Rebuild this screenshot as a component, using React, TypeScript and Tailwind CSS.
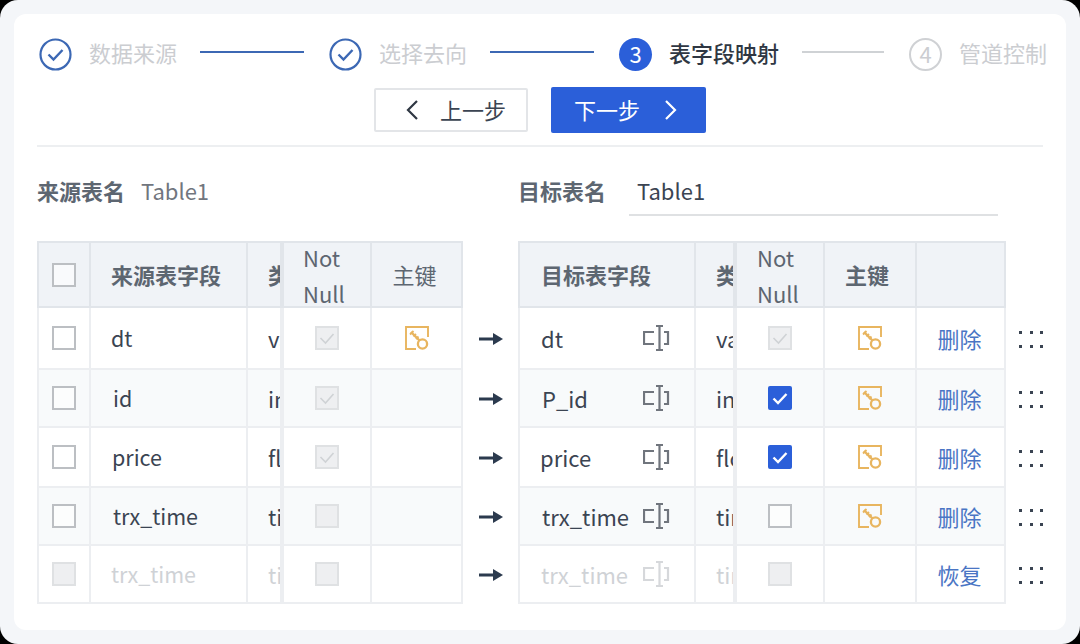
import React from "react";

const FONT = { fontFamily: '"Noto Sans CJK SC", "Noto Sans", sans-serif' };

function CircleCheck() {
  return (
    <svg width="33" height="33" viewBox="0 0 33 33" fill="none" className="shrink-0">
      <circle cx="16.5" cy="16.5" r="15" stroke="#3c68b4" strokeWidth="2.2" />
      <path d="M9.5 16.5l5 5 9-9.5" stroke="#3c68b4" strokeWidth="2.4" />
    </svg>
  );
}

function KeyIcon() {
  return (
    <svg width="24" height="24" viewBox="0 0 24 24" fill="none" stroke="#e8b55f" strokeWidth="1.9">
      <path d="M23 11V1H1v22h10" />
      <circle cx="17.500" cy="18" r="4.600" strokeWidth="2.300" />
      <path d="M6 6l8.500 8.500" strokeWidth="2.400" />
      <path d="M8.500 5L5 8.500M11 8l-2.500 2.500M13.500 10.500L11 13" strokeWidth="1.900" />
    </svg>
  );
}

function WidthIcon({ faint }: { faint?: boolean }) {
  const c = faint ? "#d6d8db" : "#70757d";
  return (
    <svg width="27" height="26" viewBox="0 0 27 26" fill="none" stroke={c} strokeWidth="2.200">
      <path d="M11 7H1v12h10M13 1h7M16.500 1v24M13 25h7M21 7h4v12h-4" />
    </svg>
  );
}

function Arrow() {
  return (
    <svg width="24" height="14" viewBox="0 0 24 14">
      <rect x="0" y="5.500" width="16" height="3" fill="#2b3a4e" />
      <path d="M14 1l10 6-10 6z" fill="#2b3a4e" />
    </svg>
  );
}

function Dots() {
  const d = [0, 1, 2, 3, 4, 5];
  return (
    <div className="grid grid-cols-3 gap-x-[8px] gap-y-[11px] ml-[13px]">
      {d.map((i) => (
        <span key={i} className="w-[3px] h-[3px] bg-[#3a4452]" />
      ))}
    </div>
  );
}

type BoxKind = "empty" | "disabled" | "disabledChecked" | "checked";

function Box({ kind }: { kind: BoxKind }) {
  if (kind === "checked") {
    return (
      <span className="w-[24px] h-[24px] rounded-[2px] bg-[#2b5fd9] flex items-center justify-center">
        <svg width="18" height="18" viewBox="0 0 18 18" fill="none">
          <path d="M2.500 9.500l4.500 4.500 8.500-9" stroke="#fff" strokeWidth="2.400" />
        </svg>
      </span>
    );
  }
  if (kind === "empty") {
    return <span className="w-[24px] h-[24px] border-2 border-[#bcbfc3] bg-white/60" />;
  }
  return (
    <span className="w-[24px] h-[24px] border-2 border-[#dfe1e3] bg-[#eeeff1] flex items-center justify-center">
      {kind === "disabledChecked" && (
        <svg width="18" height="18" viewBox="0 0 18 18" fill="none">
          <path d="M2.500 9l5 5 8-9" stroke="#cfd2d5" strokeWidth="1.600" />
        </svg>
      )}
    </span>
  );
}

const line = "border-r-2 border-b-2 border-[#eceef1]";
const headLine = "border-r-2 border-b-2 border-t-2 border-[#e1e5ea]";

type Row = {
  h: string;
  bg: string;
  color: string;
  sel: BoxKind;
  src: string;
  srcPad: string;
  type: string;
  nn: BoxKind;
  srcKey: boolean;
  dst: string;
  dstPad: string;
  dstType: string;
  dstNn: BoxKind;
  dstKey: boolean;
  action: string;
  faint?: boolean;
};

const rows: Row[] = [
  { h: "h-[62px]", bg: "bg-white", color: "text-[#3b4452]", sel: "empty", src: "dt", srcPad: "pl-[20px]", type: "varchar", nn: "disabledChecked", srcKey: true, dst: "dt", dstPad: "pl-[21px]", dstType: "varchar", dstNn: "disabledChecked", dstKey: true, action: "删除" },
  { h: "h-[58px]", bg: "bg-[#f8fafb]", color: "text-[#3b4452]", sel: "empty", src: "id", srcPad: "pl-[22px]", type: "int", nn: "disabledChecked", srcKey: false, dst: "P_id", dstPad: "pl-[22px]", dstType: "int", dstNn: "checked", dstKey: true, action: "删除" },
  { h: "h-[60px]", bg: "bg-white", color: "text-[#3b4452]", sel: "empty", src: "price", srcPad: "pl-[21px]", type: "float", nn: "disabledChecked", srcKey: false, dst: "price", dstPad: "pl-[20px]", dstType: "float", dstNn: "checked", dstKey: true, action: "删除" },
  { h: "h-[58px]", bg: "bg-[#f8fafb]", color: "text-[#3b4452]", sel: "empty", src: "trx_time", srcPad: "pl-[22px]", type: "time", nn: "disabled", srcKey: false, dst: "trx_time", dstPad: "pl-[22px]", dstType: "time", dstNn: "empty", dstKey: true, action: "删除" },
  { h: "h-[58px]", bg: "bg-white", color: "text-[#cfd2d6]", sel: "disabled", src: "trx_time", srcPad: "pl-[20px]", type: "time", nn: "disabled", srcKey: false, dst: "trx_time", dstPad: "pl-[21px]", dstType: "time", dstNn: "disabled", dstKey: false, action: "恢复", faint: true },
];

const gridCols = "grid grid-cols-[54px_157px_34px_90px_91px_55px_178px_39px_90px_92px_89px_37px]";
const head = "bg-[#f0f3f7] text-[22px] text-[#5d6671] flex items-center";

export default function App() {
  return (
    <div className="w-[1080px] h-[644px] bg-black overflow-hidden" style={FONT}>
      <div className="w-full h-full rounded-[18px] bg-[#f4f6f9] p-[14px]">
        <div className="w-full h-full rounded-[12px] bg-white px-[23px] pt-[24px]">
          {/* Stepper */}
          <div className="flex items-center h-[33px] pl-[2px] text-[22px] text-[#cbcdd1] leading-none whitespace-nowrap">
            <CircleCheck />
            <span className="ml-[17px] shrink-0 pb-[5px]">数据来源</span>
            <span className="ml-[23px] w-[104px] h-[2px] bg-[#3c68b4] -mt-[6px] shrink-0" />
            <span className="ml-[25px] shrink-0"><CircleCheck /></span>
            <span className="ml-[17px] shrink-0 pb-[5px]">选择去向</span>
            <span className="ml-[23px] w-[104px] h-[2px] bg-[#3c68b4] -mt-[6px] shrink-0" />
            <span className="ml-[25px] w-[33px] h-[33px] shrink-0 rounded-full bg-[#2b5fd9] text-white flex items-center justify-center text-[22px] pb-[3px]">3</span>
            <span className="ml-[17px] shrink-0 text-[#2f3743] font-medium pb-[5px]">表字段映射</span>
            <span className="ml-[23px] w-[82px] h-[2px] bg-[#cfd2d5] -mt-[6px] shrink-0" />
            <span className="ml-[25px] w-[33px] h-[33px] shrink-0 rounded-full border-2 border-[#cfd1d4] text-[#cbcdd1] flex items-center justify-center text-[22px] pb-[3px]">4</span>
            <span className="ml-[17px] shrink-0 pb-[5px]">管道控制</span>
          </div>

          {/* Buttons */}
          <div className="flex items-center mt-[16px] h-[46px] pl-[337px] gap-[23px] text-[22px] leading-none">
            <button className="w-[154px] h-[44px] rounded-[2px] border-2 border-[#e3e5e8] bg-white text-[#3b4452] flex items-center pl-[29px]">
              <svg width="14" height="22" viewBox="0 0 14 22" fill="none" stroke="#2f3743" strokeWidth="2.200"><path d="M12 2L3 11l9 9" /></svg>
              <span className="ml-[21px] pb-[2px]">上一步</span>
            </button>
            <button className="w-[155px] h-[46px] rounded-[2px] bg-[#2b5fd9] text-white flex items-center pl-[23px]">
              <span className="pb-[2px]">下一步</span>
              <svg className="ml-[24px]" width="14" height="22" viewBox="0 0 14 22" fill="none" stroke="#ffffff" strokeWidth="2.200"><path d="M2 2l9 9-9 9" /></svg>
            </button>
          </div>

          <div className="mt-[12px] h-[2px] bg-[#edeff1]" />

          {/* Names */}
          <div className="flex items-center h-[44px] mt-[24px] text-[22px] leading-none">
            <span className="font-bold text-[#5d6671] mb-[7px]">来源表名</span>
            <span className="ml-[16px] text-[#71767e] mb-[7px]">Table1</span>
            <span className="ml-[309px] font-bold text-[#5d6671] mb-[7px]">目标表名</span>
            <span className="ml-[23px] w-[369px] h-[46px] border-b-2 border-[#dfe1e3] pl-[8px] pb-[5px] text-[#3b4452] flex items-center">Table1</span>
          </div>

          {/* Table */}
          <div className="mt-[26px]">
            <div className={`${gridCols} grid-rows-[67px]`}>
              <div className={`${head} ${headLine} border-l-2 justify-center`}><Box kind="empty" /></div>
              <div className={`${head} ${headLine} pl-[20px] font-bold`}>来源表字段</div>
              <div className={`${head} ${headLine} pl-[20px] font-bold overflow-hidden whitespace-nowrap border-r-0`}>类型</div>
              <div className={`${head} ${headLine} border-l-2 pl-[19px] leading-[36px]`}><div>Not<br />Null</div></div>
              <div className={`${head} ${headLine} justify-center pr-[4px]`}>主键</div>
              <div />
              <div className={`${head} ${headLine} border-l-2 pl-[21px] font-bold`}>目标表字段</div>
              <div className={`${head} ${headLine} pl-[20px] font-bold overflow-hidden whitespace-nowrap border-r-0`}>类型</div>
              <div className={`${head} ${headLine} border-l-2 pl-[20px] leading-[36px]`}><div>Not<br />Null</div></div>
              <div className={`${head} ${headLine} justify-center font-bold pr-[6px]`}>主键</div>
              <div className={`${head} ${headLine}`} />
              <div />
            </div>
            {rows.map((r, i) => (
              <div key={i} className={`${gridCols} ${r.h} text-[22px] leading-none`}>
                <div className={`${r.bg} ${line} border-l-2 flex items-center justify-center`}><Box kind={r.sel} /></div>
                <div className={`${r.bg} ${line} ${r.color} ${r.srcPad} flex items-center text-[21.500px]`}>{r.src}</div>
                <div className={`${r.bg} ${line} ${r.color} border-r-0 pl-[20px] flex items-center overflow-hidden whitespace-nowrap`}>{r.type}</div>
                <div className={`${r.bg} ${line} border-l-2 flex items-center justify-center`}><Box kind={r.nn} /></div>
                <div className={`${r.bg} ${line} flex items-center justify-center`}>{r.srcKey && <KeyIcon />}</div>
                <div className="flex items-center justify-center pl-[1px]"><Arrow /></div>
                <div className={`${r.bg} ${line} ${r.color} ${r.dstPad} border-l-2 flex items-center justify-between pr-[24px]`}>
                  <span>{r.dst}</span>
                  <WidthIcon faint={r.faint} />
                </div>
                <div className={`${r.bg} ${line} ${r.color} border-r-0 pl-[20px] flex items-center overflow-hidden whitespace-nowrap`}>{r.dstType}</div>
                <div className={`${r.bg} ${line} border-l-2 flex items-center justify-center`}><Box kind={r.dstNn} /></div>
                <div className={`${r.bg} ${line} flex items-center justify-center`}>{r.dstKey && <KeyIcon />}</div>
                <div className={`${r.bg} ${line} flex items-center justify-center text-[22px] text-[#4a75c4] pr-[2px]`}>{r.action}</div>
                <div className="flex items-center"><Dots /></div>
              </div>
            ))}
          </div>
        </div>
      </div>
    </div>
  );
}
